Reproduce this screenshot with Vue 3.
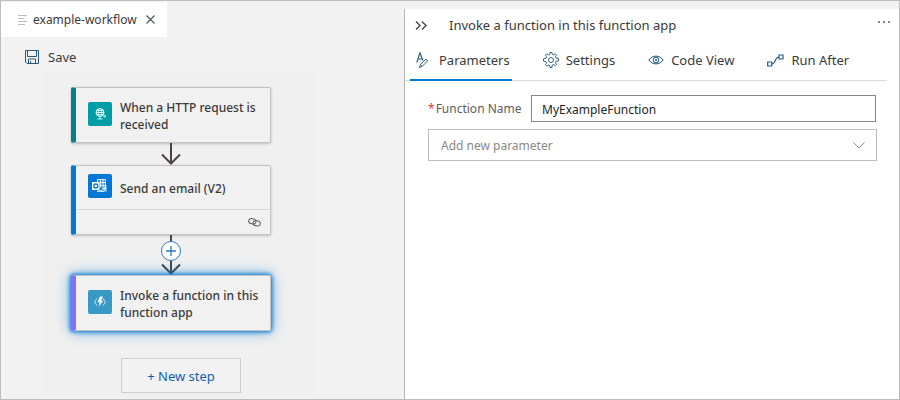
<script setup>
import { ref } from 'vue'

const functionName = ref('MyExampleFunction')
const newParameter = ref('')
const activeTab = ref('Parameters')
const tabs = ['Parameters', 'Settings', 'Code View', 'Run After']
</script>

<template>
  <div class="app">
    <main class="designer">
      <div class="file-tab">
        <svg class="lines" width="10" height="10" viewBox="0 0 10 10" aria-hidden="true">
          <path d="M0 .5h9M0 3.5h6M0 6.5h9M0 9.5h7" stroke="#bdbdbd" />
        </svg>
        <span class="file-name">example-workflow</span>
        <button class="plain close" aria-label="Close">
          <svg width="9" height="9" viewBox="0 0 9 9"><path d="M.5.5l8 8M8.5.5l-8 8" stroke="#4d5a5c" stroke-width="1.2" /></svg>
        </button>
      </div>
      <button class="plain save">
        <svg width="14" height="14" viewBox="0 0 14 14" fill="none" stroke="#2b5878">
          <path d="M.5.5h13v13H2L.5 12zM2.5.5v6h9v-6M3.5 13.500v-4.500h7v4.500M5.500 11v2.500" />
        </svg>
        <span>Save</span>
      </button>

      <section class="canvas">
        <article class="card trigger">
          <div class="card-head">
            <span class="tile">
              <svg width="24" height="24" viewBox="0 0 24 24" fill="none" stroke="#e6ffff" stroke-width=".9">
                <circle cx="12" cy="10.500" r="4" />
                <ellipse cx="12" cy="10.500" rx="1.800" ry="4" />
                <path d="M8 10.500h8M8.700 8.500h6.600M8.700 12.500h6.600M12 14.500v2.500M9.500 17h5" />
                <path d="M15 14.200h2.200M16.500 13l1.500 1.200-1.500 1.200" />
              </svg>
            </span>
            <h3>When a HTTP request is received</h3>
          </div>
        </article>

        <div class="link">
          <svg width="22" height="22" viewBox="0 0 22 22" fill="none" stroke="#484644" stroke-width="2">
            <path d="M11 0v20M2 11.500l9 9 9-9" />
          </svg>
        </div>

        <article class="card email">
          <div class="card-head">
            <span class="tile">
              <svg width="24" height="24" viewBox="0 0 24 24">
                <path d="M9.500 5.500h8v9h-8z" fill="#fff" fill-opacity=".2" />
                <path d="M9.500 8V5.500h8v8M12.500 5.500v8M15 5.500v8M11.500 8.500h6M11.500 11.500h6" fill="none" stroke="#fff" stroke-width=".8" />
                <path d="M9 16.500h3l6.500-5.500v7H9z" fill="#fff" fill-opacity=".8" />
                <path d="M12 14.500l6.500 3.500" stroke="#0078d4" stroke-width=".8" />
                <path d="M4 8h7.500v8H4z" fill="#fff" />
                <circle cx="7.800" cy="12" r="2" fill="none" stroke="#0078d4" stroke-width="1.300" />
              </svg>
            </span>
            <h3>Send an email (V2)</h3>
          </div>
          <div class="card-foot">
            <svg width="13" height="9" viewBox="0 0 13 9" fill="none" stroke="#605e5c">
              <ellipse cx="4.300" cy="3.300" rx="3.700" ry="2.600" transform="rotate(12 4.300 3.300)" />
              <ellipse cx="8.700" cy="5.300" rx="3.700" ry="2.600" transform="rotate(12 8.700 5.300)" />
            </svg>
          </div>
        </article>

        <div class="link tall">
          <svg width="22" height="40" viewBox="0 0 22 40" fill="none">
            <path d="M11 0v38M2 29.500l9 9 9-9" stroke="#484644" stroke-width="2" />
          </svg>
          <button class="insert" aria-label="Insert a new step">
            <svg width="10" height="10" viewBox="0 0 10 10"><path d="M5 0v10M0 5h10" stroke="#2f78bd" stroke-width="1.300" /></svg>
          </button>
        </div>

        <article class="card function selected">
          <div class="card-head">
            <span class="tile">
              <svg width="24" height="24" viewBox="0 0 24 24">
                <path d="M9 8.500L6.500 12 9 15.500M15 8.500l2.500 3.500-2.500 3.500" fill="none" stroke="#c5e8f6" />
                <path d="M12 6.500h3L13 10.500h2.200L10.500 17l1.200-4.800H9.500z" fill="#fff" />
              </svg>
            </span>
            <h3>Invoke a function in this function app</h3>
          </div>
        </article>

        <button class="new-step">+ New step</button>
      </section>
    </main>

    <aside class="panel">
      <header class="panel-head">
        <button class="plain" aria-label="Collapse panel">
          <svg width="12" height="9" viewBox="0 0 12 9" fill="none" stroke="#484644" stroke-width="1.400"><path d="M1 .5l4 4-4 4M7 .5l4 4-4 4" /></svg>
        </button>
        <h2>Invoke a function in this function app</h2>
        <button class="plain more" aria-label="More options">
          <svg width="12" height="2" viewBox="0 0 12 2" fill="#8a8a8a"><path d="M0 0h2v2H0zM5 0h2v2H5zM10 0h2v2h-2z" /></svg>
        </button>
      </header>

      <nav class="tabs" role="tablist">
        <button
          v-for="tab in tabs"
          :key="tab"
          class="plain tab"
          :class="{ active: tab === activeTab }"
          role="tab"
          :aria-selected="tab === activeTab"
          @click="activeTab = tab"
        >
          <svg v-if="tab === 'Parameters'" width="16" height="16" viewBox="0 0 16 16" fill="none" stroke="#34617f">
            <path d="M.8 10.500L4 .8l2.800 7.700M2 7h4.200" stroke-width="1.200" />
            <path d="M3.500 15.500l.8-3 5.700-5.300 1.700 1.700-5.500 5.500zM4.500 12.500l1.500 1.800" />
          </svg>
          <svg v-else-if="tab === 'Settings'" width="16" height="16" viewBox="0 0 16 16" fill="none" stroke="#34617f">
            <path stroke-linejoin="round" d="M6.800 2.300L7 .5h2l.2 1.800 1.500.6L12.100 1.700l1.500 1.500-1.200 1.400.6 1.500 2.500.4v2.400l-2.500.3-.6 1.500 1.200 1.500-1.500 1.500-1.400-1.200-1.500.6L9 15.500H7l-.2-1.900-1.500-.6-1.400 1.200-1.500-1.500 1.200-1.500-.6-1.500L.5 9V6.800L3 6.100l.6-1.500L2.400 3.200l1.500-1.500 1.400 1.200z" />
            <circle cx="8" cy="8" r="2.500" />
          </svg>
          <svg v-else-if="tab === 'Code View'" width="16" height="10" viewBox="0 0 16 10" fill="none" stroke="#235b7c">
            <path d="M.7 5Q4 1 8 1t7.300 4Q12 9 8 9T.7 5z" />
            <circle cx="8" cy="5" r="2.800" /><circle cx="8" cy="5" r="1" fill="#235b7c" stroke="none" />
          </svg>
          <svg v-else width="17" height="13" viewBox="0 0 17 13" fill="none" stroke="#235b7c" stroke-width="1.200">
            <path d="M.7 8h4v4h-4zM12 1h4v4h-4zM5 10c4 0 2.500-7 7-7" />
          </svg>
          <span>{{ tab }}</span>
        </button>
      </nav>

      <form class="form" @submit.prevent>
        <div class="field">
          <label for="function-name"><span class="required">*</span>Function Name</label>
          <input id="function-name" v-model="functionName" type="text" />
        </div>
        <div class="picker">
          <select v-model="newParameter" aria-label="Add new parameter">
            <option value="">Add new parameter</option>
          </select>
          <svg class="chevron" width="12" height="7" viewBox="0 0 12 7" fill="none" stroke="#8a8886"><path d="M.5.5L6 6 11.500.5" /></svg>
        </div>
      </form>
    </aside>
  </div>
</template>

<style>
body {
  background: #f2f2f2;
}
</style>

<style scoped>
* {
  box-sizing: border-box;
}

.app {
  display: grid;
  grid-template-columns: 403fr 495fr;
  min-height: 100vh;
  border: 1px solid #bdbdbd;
  background: #f2f2f2;
  color: #3b3a39;
  font-family: "Noto Sans", "Open Sans", sans-serif;
  font-size: 13px;
  line-height: 18px;
}

button,
input,
select {
  color: inherit;
  font: inherit;
}

.plain {
  padding: 0;
  border: 0;
  background: none;
}

svg {
  display: block;
  flex: none;
}

.designer {
  display: flex;
  flex-direction: column;
  align-items: flex-start;
  padding-top: 1px;
}

.file-tab {
  display: flex;
  align-items: center;
  height: 35px;
  padding: 0 12px 0 17px;
  background: #fff;
}

.file-name {
  margin: 0 9px 0 5px;
  font-size: 12px;
}

.save {
  display: flex;
  align-items: center;
  gap: 9px;
  margin: 11px 0 4px 24px;
}

.canvas {
  display: flex;
  flex-direction: column;
  align-items: flex-start;
  width: 272px;
  margin-left: 41px;
  padding: 17px 0 5px 29px;
  background: #f0f0f0;
}

.card {
  width: 200px;
  border: 1px solid #c4c2c0;
  border-left: 5px solid #038387;
  border-radius: 2px;
  background: #f1f1f1;
  box-shadow: 0 1px 3px rgba(0, 0, 0, 0.22);
}

.card-head {
  display: flex;
  align-items: flex-start;
  gap: 8px;
  height: 54px;
  padding: 11px 0 0 12px;
}

.card h3 {
  margin: 0;
  font-size: 12px;
  font-weight: 500;
  line-height: 17px;
}

.tile {
  flex: none;
  width: 24px;
  height: 24px;
  margin-top: 3px;
  border-radius: 2px;
  background: #009da5;
}

.email {
  border-left-color: #0078d4;
}

.email .card-head {
  height: 43px;
  padding-top: 8px;
}

.email .tile {
  margin-top: 0;
  background: #0078d4;
}

.email h3 {
  margin-top: 6px;
}

.card-foot {
  display: flex;
  align-items: center;
  justify-content: flex-end;
  height: 25px;
  padding-right: 9px;
  border-top: 1px solid #d9d9d9;
}

.function {
  border-left-color: #8c6cff;
}

.function .tile {
  background: #3999c6;
}

.selected {
  box-shadow: 0 0 4px 1px #0078d4, 0 0 15px rgba(0, 120, 212, 0.6);
}

.link {
  display: grid;
  place-items: center;
  width: 200px;
  height: 22px;
}

.link.tall {
  height: 40px;
}

.link > * {
  grid-area: 1 / 1;
}

.insert {
  display: grid;
  place-items: center;
  align-self: start;
  width: 20px;
  height: 20px;
  margin-top: 6px;
  padding: 0;
  border: 1px solid #2f78bd;
  border-radius: 50%;
  background: #fff;
}

.new-step {
  width: 120px;
  height: 35px;
  margin: 27px 0 0 50px;
  padding: 0;
  border: 1px solid #cfcfcf;
  background: #f2f2f2;
  color: #1160b0;
  font-size: 13px;
}

.panel {
  min-width: 0;
  margin-top: 8px;
  border-left: 1px solid #b5b5b5;
  background: #fff;
}

.panel-head {
  display: flex;
  align-items: center;
  gap: 22px;
  height: 32px;
  padding: 0 9px 0 10px;
}

.panel-head h2 {
  flex: 1;
  margin: 0;
  font-size: 13px;
  font-weight: 400;
}

.more {
  align-self: flex-start;
  margin-top: 12px;
}

.tabs {
  display: flex;
  gap: 25px;
  height: 40px;
  margin-right: 12px;
  padding-left: 5px;
  border-bottom: 1px solid #dadada;
}

.tab {
  display: flex;
  align-items: center;
  gap: 7px;
  height: 40px;
  padding: 2px 2px 2px 6px;
  border-bottom: 2px solid transparent;
}

.tab.active {
  border-bottom-color: #0078d4;
}

.form {
  display: flex;
  flex-direction: column;
  gap: 7px;
  padding: 14px 22px 14px 23px;
  font-size: 12px;
}

.field {
  display: flex;
  align-items: center;
}

.field label {
  flex: none;
  width: 103px;
  color: #605e5c;
}

.required {
  margin-right: 1px;
  color: #e03a3e;
}

.field input {
  flex: 1;
  min-width: 0;
  height: 27px;
  margin-right: 1px;
  padding: 2px 10px 0;
  border: 1px solid #8a8886;
  background: #fff;
  color: #201f1e;
}

.picker {
  display: grid;
  align-items: center;
}

.picker > * {
  grid-area: 1 / 1;
}

.picker select {
  width: 100%;
  height: 32px;
  padding: 2px 12px 0;
  border: 1px solid #bdbdbd;
  border-radius: 0;
  background: #fff;
  color: #8a8886;
  appearance: none;
}

.chevron {
  justify-self: end;
  margin-right: 12px;
  pointer-events: none;
}
</style>
